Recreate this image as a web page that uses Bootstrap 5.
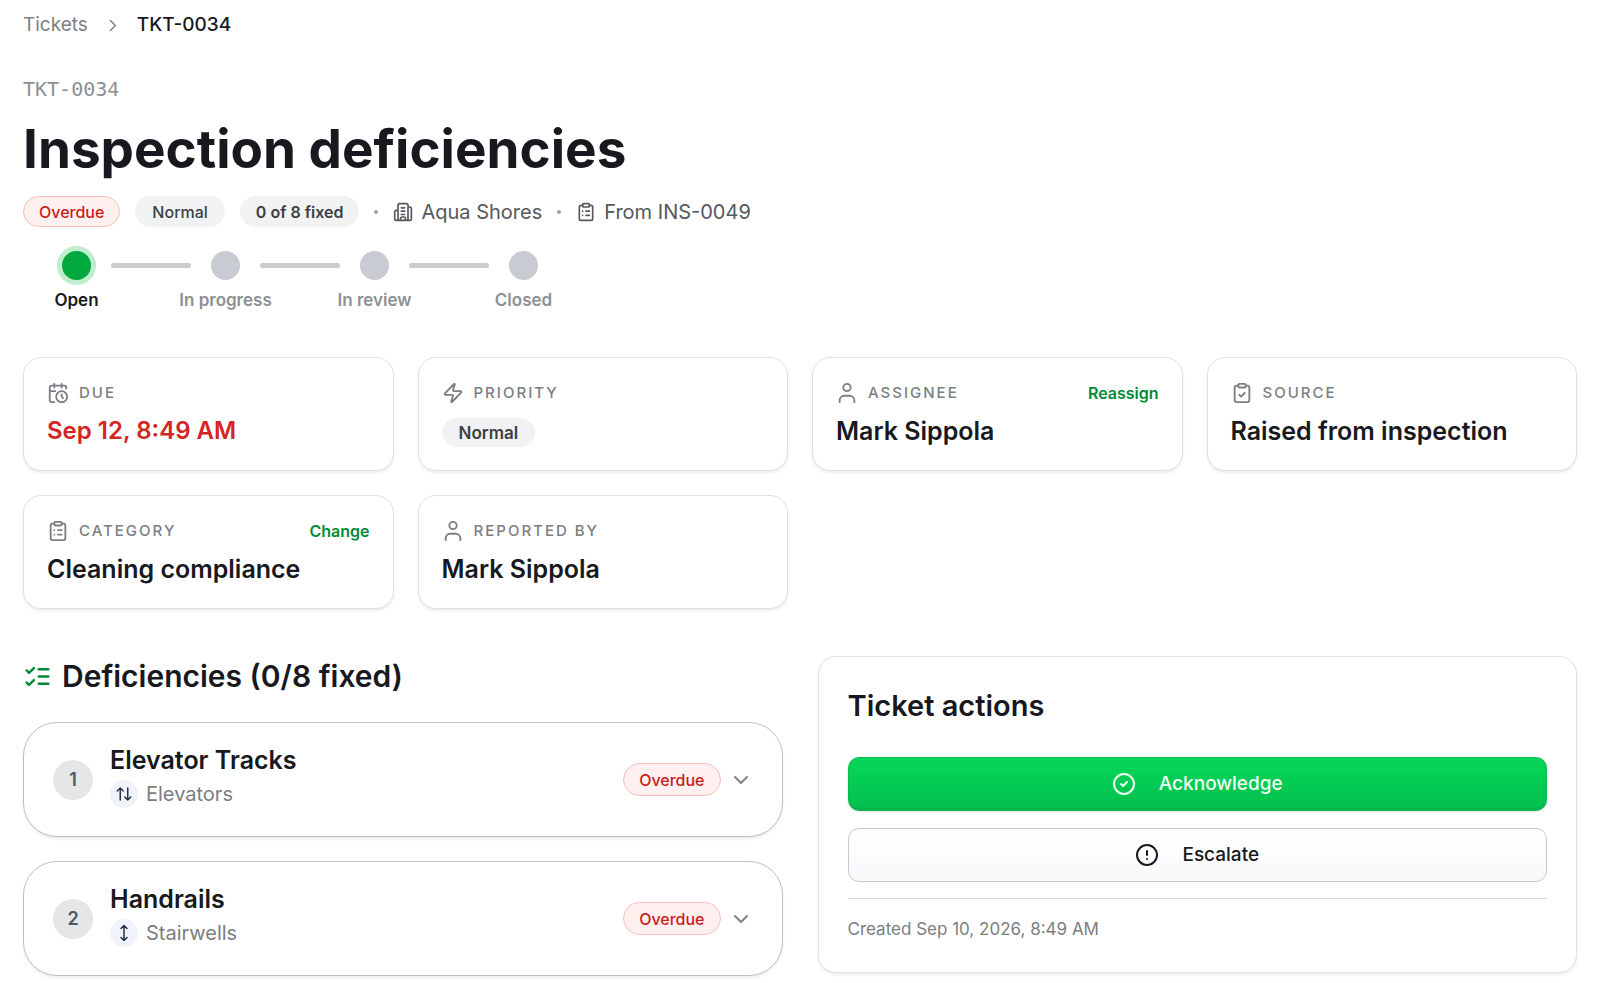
<!DOCTYPE html>
<html lang="en">
<head>
<meta charset="utf-8">
<meta name="viewport" content="width=device-width, initial-scale=1">
<title>TKT-0034 · Inspection deficiencies</title>
<link href="https://cdn.jsdelivr.net/npm/bootstrap@5.3.0/dist/css/bootstrap.min.css" rel="stylesheet">
<style>
  :root { --ink: #17191e; --soft: #7b7e82; --muted: #8d9093; --brand: #008a37; }
  body { font-family: "Inter", sans-serif; color: var(--ink); background: #fff; }
  a { text-decoration: none; color: inherit; }
  svg { flex: none; fill: none; stroke: currentColor; stroke-width: 2; stroke-linecap: round; stroke-linejoin: round; }
  .page { padding: 11px 23px 6px; }
  .crumbs { font-size: 19px; line-height: 28px; }
  .fs-meta { font-size: 20px; line-height: 28px; }
  .gap-icon { gap: 10px; }
  .c-soft { color: var(--soft); }
  .c-meta { color: #55585e; }
  .ticket-code { font: 500 20px/28px "DejaVu Sans Mono", monospace; color: var(--muted); margin-top: 36px; }
  .page-title { font-size: 53px; line-height: 60px; font-weight: 700; margin: 16px 0 17px; }
  .tag { display: inline-flex; align-items: center; height: 31px; padding: 0 16px; border: 1px solid #f0f2f3; border-radius: 16px; background: #f0f2f3; color: #3c3f44; font-size: 16px; line-height: 24px; font-weight: 500; }
  .tag-strong { padding: 0 15px; font-weight: 600; }
  .tag-fact { height: 29px; font-size: 17px; font-weight: 600; margin-top: 13px; }
  .tag-late { padding: 0 15px; background: #fff0f0; border-color: #fbbcbc; color: #c81e1e; }
  .tag-tall { height: 33px; border-radius: 17px; }
  .dot { width: 4px; height: 4px; border-radius: 50%; background: #a0a3a6; }
  .meta-row { gap: 15px; }
  .steps { margin: 18px 0 0 19px; }
  .step { width: 69px; gap: 2px; font-size: 17px; line-height: 24px; font-weight: 600; color: var(--muted); white-space: nowrap; }
  .step-dot { width: 29px; height: 29px; margin: 6px; border-radius: 50%; background: #c9cbd2; }
  .step.active { color: var(--ink); }
  .step.active .step-dot { background: #00a83e; box-shadow: 0 0 0 5px #bfedcd; }
  .step-bar { width: 80px; height: 5px; margin-top: 18px; border-radius: 3px; background: #c9cbcd; }
  .facts { margin-top: 45px; }
  .panel { background: #fff; border: 1px solid #dfe1e2; border-radius: 18px; box-shadow: 0 2px 3px rgba(0,0,0,.07); }
  .fact { height: 100%; min-height: 114px; padding: 23px 23px 20px; }
  .fact-name { font-size: 15px; line-height: 24px; font-weight: 500; letter-spacing: 2px; color: var(--soft); }
  .fact-value { font-size: 25px; line-height: 32px; font-weight: 600; margin-top: 10px; }
  .fact-date { font-size: 24px; color: #d42525; }
  .fact-link { font-size: 16px; line-height: 24px; font-weight: 600; color: var(--brand); }
  .lower { --bs-gutter-x: 35px; margin-top: 47px; }
  .section-title { font-size: 30px; line-height: 40px; font-weight: 600; margin: 0; }
  .section-head { margin-bottom: 26px; }
  .item { border-color: #bdbfc1; border-radius: 34px; padding: 20px 29px; min-height: 115px; gap: 17px; }
  .item-no { width: 40px; height: 40px; border-radius: 50%; background: #e4e6e7; color: #54575c; font-size: 18px; font-weight: 600; flex: none; }
  .item-text { padding-bottom: 8px; }
  .item-title { font-size: 25px; line-height: 32px; font-weight: 600; margin: 0 0 4px; }
  .item-kind { width: 28px; height: 28px; border-radius: 50%; background: #f0f3f9; color: #26304a; }
  .item-toggle { border: 0; background: none; padding: 0; color: #7f8286; display: flex; }
  .actions { padding: 29px 29px 26px; min-height: 317px; }
  .actions-title { font-size: 29px; margin-bottom: 31px; }
  .act { width: 100%; height: 54px; display: flex; align-items: center; justify-content: center; gap: 23px; border-radius: 11px; font-size: 19px; font-weight: 500; }
  .act-go, .act-go:hover { color: #effff4; border: 1px solid #09bb4e; background: linear-gradient(#06d75a, #02c04c); box-shadow: inset 0 -2px 0 #08b14a, 0 1px 3px rgba(0,0,0,.12); margin-bottom: 17px; }
  .act-plain, .act-plain:hover { color: var(--ink); border: 1px solid #c6c9cd; background: linear-gradient(#fff, #f8f9fb); }
  .created { border-top: 1px solid #d9dbdd; margin-top: 16px; padding-top: 17px; font-size: 17px; line-height: 26px; color: var(--soft); }
</style>
</head>
<body>
<svg class="d-none" aria-hidden="true">
  <symbol id="clip" viewBox="0 0 24 24"><rect x="8" y="2" width="8" height="4" rx="1"/><path d="M16 4h2a2 2 0 0 1 2 2v14a2 2 0 0 1-2 2H6a2 2 0 0 1-2-2V6a2 2 0 0 1 2-2h2M12 11h4M12 16h4M8 11h.01M8 16h.01"/></symbol>
  <symbol id="clip-check" viewBox="0 0 24 24"><rect x="8" y="2" width="8" height="4" rx="1"/><path d="M16 4h2a2 2 0 0 1 2 2v14a2 2 0 0 1-2 2H6a2 2 0 0 1-2-2V6a2 2 0 0 1 2-2h2M9 14l2 2 4-4"/></symbol>
  <symbol id="person" viewBox="0 0 24 24"><circle cx="12" cy="6" r="4"/><path d="M4 22v-2a5 5 0 0 1 5-5h6a5 5 0 0 1 5 5v2"/></symbol>
  <symbol id="chev" viewBox="0 0 24 24"><path d="m6 9 6 6 6-6"/></symbol>
</svg>

<main class="page">
  <nav class="crumbs d-flex align-items-center" aria-label="Breadcrumb">
    <a href="#" class="c-soft">Tickets</a>
    <svg class="c-soft mx-3" width="17" height="17" viewBox="0 0 24 24"><path d="m9 5 7 7-7 7"/></svg>
    <span class="fw-medium" aria-current="page">TKT-0034</span>
  </nav>

  <header>
    <div class="ticket-code">TKT-0034</div>
    <h1 class="page-title">Inspection deficiencies</h1>
    <div class="meta-row d-flex flex-wrap align-items-center">
      <span class="tag tag-late">Overdue</span>
      <span class="tag">Normal</span>
      <span class="tag tag-strong">0 of 8 fixed</span>
      <span class="dot"></span>
      <a href="#" class="d-flex align-items-center gap-2 fs-meta c-meta">
        <svg width="20" height="20" viewBox="0 0 24 24"><path d="M6 22V4a2 2 0 0 1 2-2h8a2 2 0 0 1 2 2v18M6 10H4a2 2 0 0 0-2 2v8a2 2 0 0 0 2 2h16a2 2 0 0 0 2-2V8a2 2 0 0 0-2-2h-2M10 7h4M10 11h4M10 15h4M9 22v-2a2 2 0 0 1 2-2h2a2 2 0 0 1 2 2v2"/></svg>
        Aqua Shores</a>
      <span class="dot"></span>
      <a href="#" class="d-flex align-items-center gap-2 fs-meta c-meta">
        <svg width="20" height="20"><use href="#clip"/></svg>
        From INS-0049</a>
    </div>
    <div class="steps d-flex">
      <div class="step active d-flex flex-column align-items-center"><span class="step-dot"></span><span>Open</span></div>
      <span class="step-bar"></span>
      <div class="step d-flex flex-column align-items-center"><span class="step-dot"></span><span>In progress</span></div>
      <span class="step-bar"></span>
      <div class="step d-flex flex-column align-items-center"><span class="step-dot"></span><span>In review</span></div>
      <span class="step-bar"></span>
      <div class="step d-flex flex-column align-items-center"><span class="step-dot"></span><span>Closed</span></div>
    </div>
  </header>

  <section class="facts row row-cols-1 row-cols-md-2 row-cols-xl-4 g-4">
    <div class="col mt-0"><div class="panel fact">
      <div class="fact-name d-flex align-items-center gap-icon">
        <svg width="22" height="22" viewBox="0 0 24 24"><path d="M21 7V6a2 2 0 0 0-2-2H5a2 2 0 0 0-2 2v14a2 2 0 0 0 2 2h3M8 2v4M16 2v4M3 10h6"/><circle cx="16" cy="16" r="6"/><path d="M16 13.500v2.500l1.500 1.500"/></svg>DUE</div>
      <div class="fact-value fact-date">Sep 12, 8:49 AM</div>
    </div></div>
    <div class="col mt-0"><div class="panel fact">
      <div class="fact-name d-flex align-items-center gap-icon">
        <svg width="22" height="22" viewBox="0 0 24 24"><path d="M4 14a1 1 0 0 1-.78-1.630l9.900-10.200a.5.5 0 0 1 .86.460l-1.920 6.020A1 1 0 0 0 13 10h7a1 1 0 0 1 .78 1.630l-9.900 10.200a.5.5 0 0 1-.86-.460l1.920-6.020A1 1 0 0 0 11 14z"/></svg>PRIORITY</div>
      <span class="tag tag-fact">Normal</span>
    </div></div>
    <div class="col mt-0"><div class="panel fact">
      <div class="d-flex justify-content-between">
        <div class="fact-name d-flex align-items-center gap-icon"><svg width="22" height="22"><use href="#person"/></svg>ASSIGNEE</div>
        <a href="#" class="fact-link">Reassign</a>
      </div>
      <div class="fact-value">Mark Sippola</div>
    </div></div>
    <div class="col mt-0"><div class="panel fact">
      <div class="fact-name d-flex align-items-center gap-icon"><svg width="22" height="22"><use href="#clip-check"/></svg>SOURCE</div>
      <div class="fact-value">Raised from inspection</div>
    </div></div>
    <div class="col"><div class="panel fact">
      <div class="d-flex justify-content-between">
        <div class="fact-name d-flex align-items-center gap-icon"><svg width="22" height="22"><use href="#clip"/></svg>CATEGORY</div>
        <a href="#" class="fact-link">Change</a>
      </div>
      <div class="fact-value">Cleaning compliance</div>
    </div></div>
    <div class="col"><div class="panel fact">
      <div class="fact-name d-flex align-items-center gap-icon"><svg width="22" height="22"><use href="#person"/></svg>REPORTED BY</div>
      <div class="fact-value">Mark Sippola</div>
    </div></div>
  </section>

  <div class="lower row row-cols-1 row-cols-lg-2">
    <section class="col">
      <div class="section-head d-flex align-items-center gap-icon">
        <svg width="29" height="29" viewBox="0 0 24 24" color="#008a37"><path d="m3 17 2 2 4-4M3 7l2 2 4-4M13 6h8M13 12h8M13 18h8"/></svg>
        <h2 class="section-title">Deficiencies (0/8 fixed)</h2>
      </div>
      <div class="d-grid gap-4">
        <article class="panel item d-flex align-items-center">
          <span class="item-no d-flex align-items-center justify-content-center">1</span>
          <div class="item-text flex-grow-1">
            <h3 class="item-title">Elevator Tracks</h3>
            <div class="d-flex align-items-center gap-2 fs-meta c-soft">
              <span class="item-kind d-flex align-items-center justify-content-center"><svg width="18" height="18" viewBox="0 0 24 24"><path d="m3 8 4-4 4 4M7 4v16M21 16l-4 4-4-4M17 20V4"/></svg></span>Elevators</div>
          </div>
          <div class="d-flex align-items-center gap-2">
            <span class="tag tag-late tag-tall">Overdue</span>
            <button class="item-toggle" type="button" aria-label="Expand Elevator Tracks"><svg width="24" height="24"><use href="#chev"/></svg></button>
          </div>
        </article>
        <article class="panel item d-flex align-items-center">
          <span class="item-no d-flex align-items-center justify-content-center">2</span>
          <div class="item-text flex-grow-1">
            <h3 class="item-title">Handrails</h3>
            <div class="d-flex align-items-center gap-2 fs-meta c-soft">
              <span class="item-kind d-flex align-items-center justify-content-center"><svg width="18" height="18" viewBox="0 0 24 24"><path d="M12 2v20M8 18l4 4 4-4M8 6l4-4 4 4"/></svg></span>Stairwells</div>
          </div>
          <div class="d-flex align-items-center gap-2">
            <span class="tag tag-late tag-tall">Overdue</span>
            <button class="item-toggle" type="button" aria-label="Expand Handrails"><svg width="24" height="24"><use href="#chev"/></svg></button>
          </div>
        </article>
      </div>
    </section>

    <aside class="col">
      <div class="panel actions">
        <h2 class="section-title actions-title">Ticket actions</h2>
        <button type="button" class="btn act act-go"><svg width="24" height="24" viewBox="0 0 24 24"><circle cx="12" cy="12" r="10"/><path d="m9 12 2 2 4-4"/></svg>Acknowledge</button>
        <button type="button" class="btn act act-plain"><svg width="24" height="24" viewBox="0 0 24 24"><circle cx="12" cy="12" r="10"/><path d="M12 8v4M12 16h.01"/></svg>Escalate</button>
        <div class="created">Created Sep 10, 2026, 8:49 AM</div>
      </div>
    </aside>
  </div>
</main>
<script src="https://cdn.jsdelivr.net/npm/bootstrap@5.3.0/dist/js/bootstrap.bundle.min.js"></script>
</body>
</html>
